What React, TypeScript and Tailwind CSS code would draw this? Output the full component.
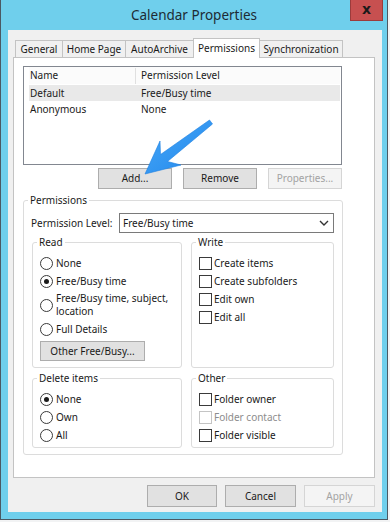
import React from "react";

const F = "font-['Noto_Sans',sans-serif]";

function Radio({ checked, label, tall }: { checked?: boolean; label: React.ReactNode; tall?: boolean }) {
  return (
    <div className={`flex items-center gap-[3px] whitespace-nowrap ${tall ? "h-[30px]" : "h-[18px]"}`}>
      <span className="w-[13px] h-[13px] shrink-0 rounded-full border border-[#3a3a3a] bg-white flex items-center justify-center">
        {checked && <span className="w-[5px] h-[5px] rounded-full bg-[#1a1a1a]" />}
      </span>
      <span className={tall ? "leading-[13px]" : ""}>{label}</span>
    </div>
  );
}

function Check({ label, disabled }: { label: string; disabled?: boolean }) {
  return (
    <div className="flex items-center gap-[2px] h-[18px] whitespace-nowrap">
      <span
        className={`w-[13px] h-[13px] shrink-0 border bg-white ${disabled ? "border-[#c4c4c4]" : "border-[#3a3a3a]"}`}
      />
      <span className={disabled ? "text-[#8d8d8d]" : ""}>{label}</span>
    </div>
  );
}

function Btn({ label, w, h, disabled }: { label: string; w: string; h: string; disabled?: boolean }) {
  return (
    <div
      className={`${w} ${h} flex items-center justify-center border whitespace-nowrap ${
        disabled ? "border-[#d5d5d5] bg-[#f4f4f4] text-[#a3a3a3]" : "border-[#adadad] bg-[#e1e1e1] text-[#1a1a1a]"
      }`}
    >
      {label}
    </div>
  );
}

function Group({ title, className, children }: { title: string; className?: string; children?: React.ReactNode }) {
  return (
    <fieldset className={`border border-[#dcdcdc] rounded-[3px] ${className ?? ""}`}>
      <legend className="ml-[4px] px-[2px] h-[16px] leading-[16px] whitespace-nowrap">{title}</legend>
      {children}
    </fieldset>
  );
}

export default function App() {
  const tabs = [
    { t: "General", w: "w-[48px]" },
    { t: "Home Page", w: "w-[64px]" },
    { t: "AutoArchive", w: "w-[69px]" },
    { t: "Permissions", w: "w-[67px]", sel: true },
    { t: "Synchronization", w: "w-[84px]" },
  ];
  return (
    <div className={`relative w-[390px] h-[522px] bg-[#f2f3f4] overflow-hidden text-[10px] text-[#1a1a1a] ${F}`}>
      <div className="w-[388px] h-[520px] bg-[#6fcfec] border-x border-b border-[#4b5963] flex flex-col">
        {/* title bar */}
        <div className="h-[30px] flex items-start shrink-0">
          <div className="w-[37px]" />
          <div className="flex-1 text-center text-[13.5px] leading-[30px] text-[#1d2b34]">Calendar Properties</div>
          <div className="w-[33px] h-[21px] mr-[4px] bg-[#c75050] border border-t-0 border-[#9c3b3b] flex items-center justify-center text-[14px] font-bold text-[#1a1a1a] leading-none">
            <span className="font-['DejaVu_Sans',sans-serif] -mt-[2px]">x</span>
          </div>
        </div>
        {/* content */}
        <div className="flex-1 ml-[7px] mr-[5px] mb-[7px] bg-[#f0f0f0] flex flex-col pt-[8px]">
          {/* tabs */}
          <div className="relative z-10 flex items-end h-[19px] ml-[7px]">
            {tabs.map((tab, i) =>
              tab.sel ? (
                <div
                  key={tab.t}
                  className={`${tab.w} -ml-px h-[20px] -mb-px bg-white border border-b-0 border-[#c3c3c3] flex items-start justify-center pt-[2px] leading-[14px] whitespace-nowrap`}
                >
                  {tab.t}
                </div>
              ) : (
                <div
                  key={tab.t}
                  className={`${tab.w} ${i === 0 ? "" : "-ml-px"} h-[17px] bg-[#f0f0f0] border border-b-0 border-[#c3c3c3] flex items-center justify-center leading-[14px] whitespace-nowrap`}
                >
                  {tab.t}
                </div>
              )
            )}
          </div>
          {/* panel */}
          <div className="ml-[5px] w-[362px] h-[421px] bg-white border border-[#c3c3c3] flex flex-col">
            {/* list */}
            <div className="ml-[9px] mt-[8px] w-[319px] h-[99px] border border-[#828790] bg-white flex flex-col">
              <div className="h-[17px] ml-[5px] mr-[1px] flex items-center bg-[#fbfbfb]">
                <div className="w-[106px] pl-[1px]">Name</div>
                <div className="w-px h-[16px] bg-[#e0e0e0]" />
                <div className="pl-[5px]">Permission Level</div>
              </div>
              <div className="h-[16px] mt-px ml-[5px] mr-[1px] flex items-center bg-[#e9e9e9]">
                <div className="w-[107px] pl-[1px]">Default</div>
                <div className="pl-[5px]">Free/Busy time</div>
              </div>
              <div className="h-[17px] ml-[5px] mr-[1px] flex items-center">
                <div className="w-[107px] pl-[1px]">Anonymous</div>
                <div className="pl-[5px]">None</div>
              </div>
            </div>
            {/* buttons */}
            <div className="flex gap-[11px] ml-[84px] mt-[3px]">
              <Btn label="Add..." w="w-[74px]" h="h-[21px]" />
              <Btn label="Remove" w="w-[74px]" h="h-[21px]" />
              <Btn label="Properties..." w="w-[74px]" h="h-[21px]" disabled />
            </div>
            {/* permissions group */}
            <Group title="Permissions" className="ml-[9px] mt-[3px] w-[320px] pb-[6px]">
              <div className="flex items-center mt-[5px] ml-[7px] h-[20px]">
                <div className="w-[88px] whitespace-nowrap">Permission Level:</div>
                <div className="w-[215px] h-[20px] border border-[#7a7a7a] bg-white flex items-center justify-between pl-[3px] pr-[4px]">
                  <span>Free/Busy time</span>
                  <svg width="10" height="6" viewBox="0 0 10 6">
                    <path d="M1 1 L5 5 L9 1" fill="none" stroke="#333" strokeWidth="1.4" />
                  </svg>
                </div>
              </div>
              <div className="flex gap-[9px] ml-[8px] mt-[1px]">
                <Group title="Read" className="w-[150px] pb-[6px]">
                  <div className="ml-[7px] mt-[4px] flex flex-col">
                    <Radio label="None" />
                    <Radio label="Free/Busy time" checked />
                    <Radio
                      tall
                      label={
                        <>
                          Free/Busy time, subject,
                          <br />
                          location
                        </>
                      }
                    />
                    <Radio label="Full Details" />
                    <div className="mt-[3px]">
                      <Btn label="Other Free/Busy..." w="w-[105px]" h="h-[20px]" />
                    </div>
                  </div>
                </Group>
                <Group title="Write" className="w-[143px]">
                  <div className="ml-[7px] mt-[4px] flex flex-col">
                    <Check label="Create items" />
                    <Check label="Create subfolders" />
                    <Check label="Edit own" />
                    <Check label="Edit all" />
                  </div>
                </Group>
              </div>
              <div className="flex gap-[9px] ml-[8px] mt-[2px]">
                <Group title="Delete items" className="w-[150px] pb-[3px]">
                  <div className="ml-[7px] mt-[4px] flex flex-col">
                    <Radio label="None" checked />
                    <Radio label="Own" />
                    <Radio label="All" />
                  </div>
                </Group>
                <Group title="Other" className="w-[143px] pb-[3px]">
                  <div className="ml-[7px] mt-[4px] flex flex-col">
                    <Check label="Folder owner" />
                    <Check label="Folder contact" disabled />
                    <Check label="Folder visible" />
                  </div>
                </Group>
              </div>
            </Group>
          </div>
          {/* bottom buttons */}
          <div className="flex justify-end gap-[8px] mr-[7px] mt-[7px]">
            <Btn label="OK" w="w-[70px]" h="h-[22px]" />
            <Btn label="Cancel" w="w-[71px]" h="h-[22px]" />
            <Btn label="Apply" w="w-[71px]" h="h-[22px]" disabled />
          </div>
        </div>
      </div>
      {/* annotation arrow */}
      <svg className="absolute left-0 top-0 pointer-events-none" width="390" height="522" viewBox="0 0 390 522">
        <defs>
          <linearGradient id="ag" x1="0" y1="0" x2="1" y2="1">
            <stop offset="0" stopColor="#4aa9f7" />
            <stop offset="1" stopColor="#1f86ec" />
          </linearGradient>
        </defs>
        <polygon
          points="145,174 181,165 167.5,161.5 212.5,124 209.5,120 160.5,154.5 160,141"
          fill="url(#ag)"
          stroke="#1c7fe0"
          strokeWidth="0.6"
          strokeLinejoin="round"
        />
      </svg>
    </div>
  );
}
